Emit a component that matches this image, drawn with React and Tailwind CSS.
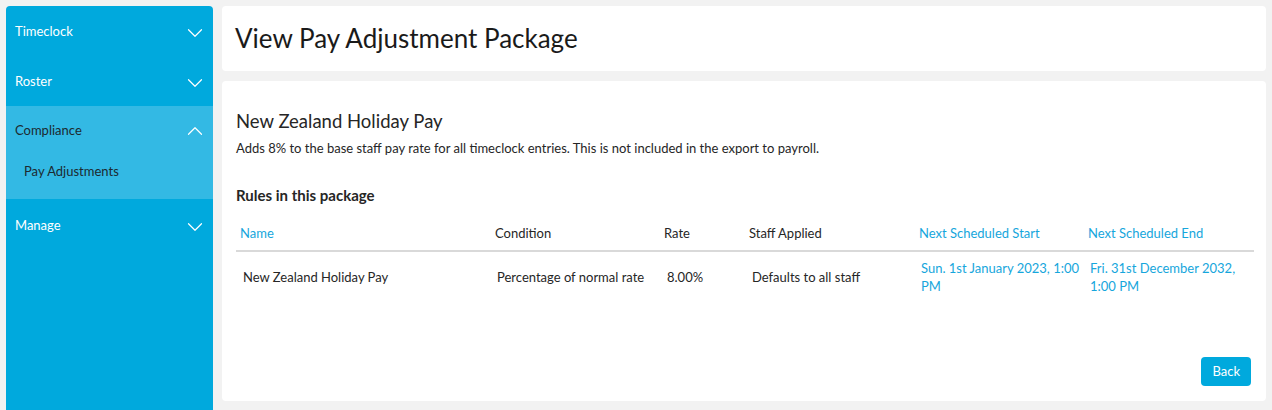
import React from 'react';
import { ChevronDown, ChevronUp } from 'lucide-react';

const font = { fontFamily: 'Lato, "Noto Sans", sans-serif' };

const NavItem = ({ label, open, active, className = '' }) => (
  <div
    className={`flex items-center justify-between h-[50px] pl-[9px] pr-[5px] text-[13px] ${
      active ? 'text-[#1d2a30]' : 'text-white'
    } ${className}`}
  >
    <span>{label}</span>
    {open ? (
      <ChevronUp className="w-[26px] h-[26px] text-white" strokeWidth={1.1} />
    ) : (
      <ChevronDown className="w-[26px] h-[26px] text-white mt-[2px]" strokeWidth={1.1} />
    )}
  </div>
);

const rules = [
  {
    name: 'New Zealand Holiday Pay',
    condition: 'Percentage of normal rate',
    rate: '8.00%',
    staff: 'Defaults to all staff',
    start: 'Sun. 1st January 2023, 1:00 PM',
    end: 'Fri. 31st December 2032, 1:00 PM',
  },
];

const App = () => {
  return (
    <div style={font} className="w-[1272px] h-[410px] bg-[#f2f2f2] flex gap-[9px] pl-[6px] pt-[6px] overflow-hidden">
      {/* Sidebar */}
      <aside className="w-[207px] h-[420px] shrink-0 bg-[#00a9dd] rounded-tl-[4px] rounded-tr-[4px]">
        <NavItem label="Timeclock" className="pt-[2px]" />
        <NavItem label="Roster" className="pt-[2px]" />
        <div className="bg-[#33b9e4]">
          <NavItem label="Compliance" open active />
          <div className="h-[43px] pl-[18px] pt-[6px] text-[13px] text-[#1d2a30]">Pay Adjustments</div>
        </div>
        <NavItem label="Manage" className="pt-[4px]" />
      </aside>

      {/* Main */}
      <main className="w-[1044px] flex flex-col gap-[10px]">
        <div className="h-[65px] bg-white rounded-[4px] flex items-center pl-[13px]">
          <h1 className="text-[26px] text-[#1a1a1a]">View Pay Adjustment Package</h1>
        </div>

        <div className="h-[320px] bg-white rounded-[4px] pl-[14px] pr-[12px] pt-[27px] flex flex-col">
          <h2 className="text-[18.5px] text-[#262626] leading-[26px]">New Zealand Holiday Pay</h2>
          <p className="text-[13px] text-[#262626] mt-[5px]">
            Adds 8% to the base staff pay rate for all timeclock entries. This is not included in the export to payroll.
          </p>
          <h3 className="text-[15px] font-bold text-[#262626] mt-[25px]">Rules in this package</h3>

          <table className="mt-[18px] w-[1018px] table-fixed text-[13px] text-[#262626] border-collapse">
            <colgroup>
              <col className="w-[255px]" />
              <col className="w-[169px]" />
              <col className="w-[85px]" />
              <col className="w-[170px]" />
              <col className="w-[169px]" />
              <col className="w-[170px]" />
            </colgroup>
            <thead>
              <tr className="border-b-2 border-[#d9d9d9] text-left">
                <th className="font-normal pl-[4px] pb-[6px] text-[#16a6dc]">Name</th>
                <th className="font-normal pl-[4px] pb-[6px]">Condition</th>
                <th className="font-normal pl-[4px] pb-[6px]">Rate</th>
                <th className="font-normal pl-[4px] pb-[6px]">Staff Applied</th>
                <th className="font-normal pl-[4px] pb-[6px] text-[#16a6dc]">Next Scheduled Start</th>
                <th className="font-normal pl-[4px] pb-[6px] text-[#16a6dc]">Next Scheduled End</th>
              </tr>
            </thead>
            <tbody>
              {rules.map((r) => (
                <tr key={r.name} className="align-middle leading-[18px]">
                  <td className="pl-[7px] pt-[7px]">{r.name}</td>
                  <td className="pl-[6px] pt-[7px]">{r.condition}</td>
                  <td className="pl-[7px] pt-[7px]">{r.rate}</td>
                  <td className="pl-[7px] pt-[7px]">{r.staff}</td>
                  <td className="pl-[6px] pr-[4px] pt-[7px] text-[#16a6dc]">{r.start}</td>
                  <td className="pl-[6px] pr-[6px] pt-[7px] text-[#16a6dc]">{r.end}</td>
                </tr>
              ))}
            </tbody>
          </table>

          <div className="mt-auto mb-[15px] mr-[3px] flex justify-end">
            <button className="h-[29px] px-[11px] bg-[#00a9dd] text-white text-[13px] rounded-[4px]">Back</button>
          </div>
        </div>
      </main>
    </div>
  );
};

export default App;
